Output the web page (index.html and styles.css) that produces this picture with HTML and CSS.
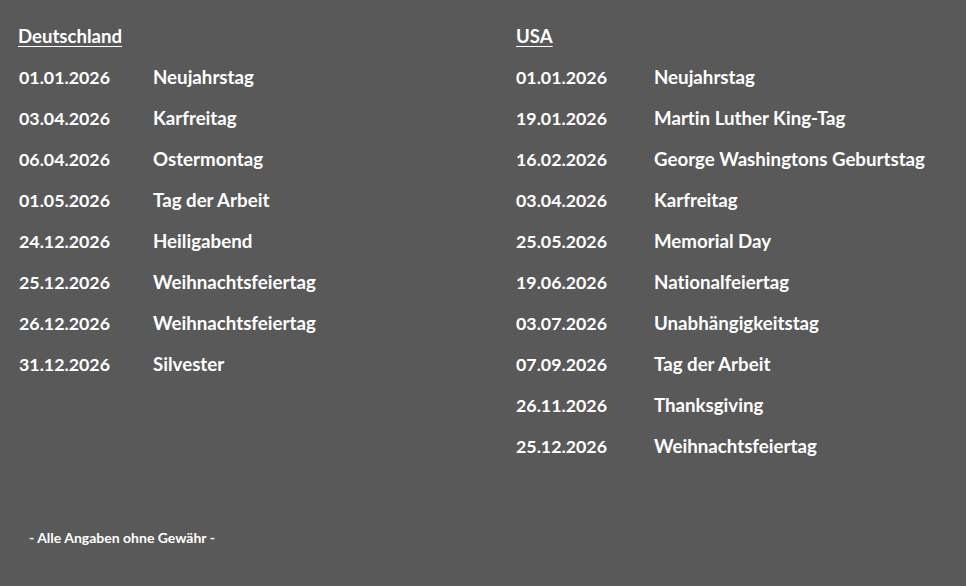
FILE: index.html
```html
<!DOCTYPE html>
<html lang="de">
<head>
<meta charset="utf-8">
<title>Feiertage 2026</title>
<link rel="stylesheet" href="styles.css">
</head>
<body>
<main class="page">
  <div class="columns">
    <section class="country country-de">
      <h2 class="heading"><span>Deutschland</span></h2>
      <div class="row"><span class="date">01.01.2026</span><span class="name">Neujahrstag</span></div>
      <div class="row"><span class="date">03.04.2026</span><span class="name">Karfreitag</span></div>
      <div class="row"><span class="date">06.04.2026</span><span class="name">Ostermontag</span></div>
      <div class="row"><span class="date">01.05.2026</span><span class="name">Tag der Arbeit</span></div>
      <div class="row"><span class="date">24.12.2026</span><span class="name">Heiligabend</span></div>
      <div class="row"><span class="date">25.12.2026</span><span class="name">Weihnachtsfeiertag</span></div>
      <div class="row"><span class="date">26.12.2026</span><span class="name">Weihnachtsfeiertag</span></div>
      <div class="row"><span class="date">31.12.2026</span><span class="name">Silvester</span></div>
    </section>
    <section class="country country-us">
      <h2 class="heading"><span>USA</span></h2>
      <div class="row"><span class="date">01.01.2026</span><span class="name">Neujahrstag</span></div>
      <div class="row"><span class="date">19.01.2026</span><span class="name">Martin Luther King-Tag</span></div>
      <div class="row"><span class="date">16.02.2026</span><span class="name">George Washingtons Geburtstag</span></div>
      <div class="row"><span class="date">03.04.2026</span><span class="name">Karfreitag</span></div>
      <div class="row"><span class="date">25.05.2026</span><span class="name">Memorial Day</span></div>
      <div class="row"><span class="date">19.06.2026</span><span class="name">Nationalfeiertag</span></div>
      <div class="row"><span class="date">03.07.2026</span><span class="name">Unabhängigkeitstag</span></div>
      <div class="row"><span class="date">07.09.2026</span><span class="name">Tag der Arbeit</span></div>
      <div class="row"><span class="date">26.11.2026</span><span class="name">Thanksgiving</span></div>
      <div class="row"><span class="date">25.12.2026</span><span class="name">Weihnachtsfeiertag</span></div>
    </section>
  </div>
  <p class="footer">- Alle Angaben ohne Gewähr -</p>
</main>
</body>
</html>
```
FILE: styles.css
```css
html, body {
  margin: 0;
  padding: 0;
  background: #595959;
}
body {
  width: 966px;
  height: 586px;
  overflow: hidden;
  color: #ffffff;
  font-family: "Lato", "Open Sans", "Liberation Sans", sans-serif;
  font-weight: 700;
  font-size: 18px;
  font-variant-ligatures: none;
}
.page {
  padding: 16px 0 0 19px;
}
.columns {
  display: flex;
}
.country-de {
  width: 497px;
}
.heading {
  margin: 0;
  font-size: 18.6px;
  font-weight: 700;
  height: 41px;
  line-height: 41px;
}
.heading span {
  text-decoration: underline;
  text-decoration-thickness: 1px;
  text-underline-offset: 3px;
}
.country-de .heading span {
  margin-left: -1px;
}
.row {
  display: flex;
  height: 41px;
  line-height: 41px;
  white-space: nowrap;
}
.date {
  font-size: 17.8px;
}
.name {
  font-size: 18.7px;
}
.country-de .date {
  width: 134px;
}
.country-us .date {
  width: 138px;
}
.footer {
  margin: 61px 0 0 10px;
  font-size: 14px;
  line-height: 20px;
}
```
